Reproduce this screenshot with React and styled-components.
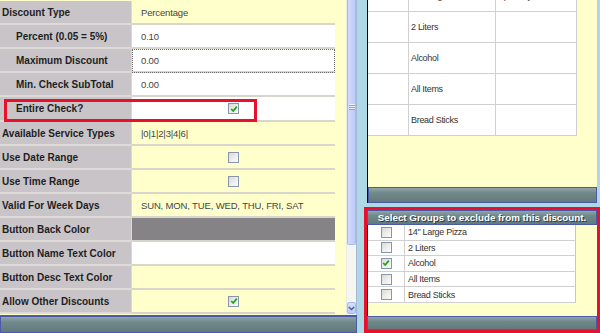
import React from 'react';
import styled, { createGlobalStyle } from 'styled-components';

const Global = createGlobalStyle`
  html, body { margin: 0; padding: 0; }
  body {
    width: 600px;
    height: 333px;
    overflow: hidden;
    background: #add8e6;
    font-family: "Liberation Sans", Arial, sans-serif;
  }
  * { box-sizing: border-box; }
`;

const BAR_BG = 'linear-gradient(#8fa5a7 0%, #72898b 35%, #637a7c 100%)';
const YELLOW = '#ffffcc';

const Screen = styled.div`
  display: flex;
  width: 600px;
  height: 333px;
  overflow: hidden;
  background: #add8e6;
`;

const LeftPanel = styled.div`
  width: 357px;
  display: flex;
  flex-direction: column;
`;

const GridArea = styled.div`
  display: flex;
  height: 315px;
`;

const Grid = styled.div`
  width: 346px;
  background: ${YELLOW};
  padding-top: 1px;
  overflow: hidden;
`;

const Row = styled.div`
  position: relative;
  display: grid;
  grid-template-columns: 132px 203px;
  height: ${p => p.$h || 24}px;
`;

const Label = styled.div`
  display: flex;
  align-items: center;
  background: #c8c4c8;
  border-bottom: 2px solid #dedad8;
  border-right: 1px solid #dcd8d8;
  padding-left: ${p => (p.$indent ? 16 : 2)}px;
  font-size: 10px;
  font-weight: bold;
  color: #1e1e1e;
  white-space: nowrap;
`;

const valueBg = { yellow: YELLOW, white: '#ffffff', gray: '#858385' };

const Value = styled.div`
  display: flex;
  align-items: center;
  justify-content: ${p => (p.$center ? 'center' : 'flex-start')};
  background: ${p => valueBg[p.$tone || 'yellow']};
  border-bottom: 2px solid #d8d5cd;
  padding-left: ${p => (p.$center ? 0 : 9)}px;
  font-size: 9.5px;
  letter-spacing: -0.15px;
  color: #454545;
  white-space: nowrap;
  outline: ${p => (p.$focus ? '1px dotted #6a6a6a' : 'none')};
  outline-offset: -1px;
`;

const Highlight = styled.div`
  position: absolute;
  left: 4px;
  top: 2px;
  width: 253px;
  height: 23px;
  border: 3px solid #e8102c;
  pointer-events: none;
`;

const Box = styled.span`
  display: inline-flex;
  align-items: center;
  justify-content: center;
  width: 11px;
  height: 11px;
  border: 1px solid #8796ab;
  background: linear-gradient(135deg, #d9d9d5 0%, #f0f0ec 60%, #fbfbf9 100%);
`;

const Check = ({ checked }) => (
  <Box>
    {checked && (
      <svg width="8" height="8" viewBox="0 0 8 8">
        <path d="M1.2 4 L3.2 6 L6.8 1.6" fill="none" stroke="#1fa11f" strokeWidth="1.7" />
      </svg>
    )}
  </Box>
);

const ScrollTrack = styled.div`
  width: 11px;
  display: flex;
  flex-direction: column;
  background: #f6f6f1;
  border-left: 1px solid #ebebe4;
  border-right: 1px solid #a9b5d6;
`;

const Thumb = styled.div`
  height: 245px;
  background: linear-gradient(90deg, #cfdafc, #bccbf8);
  border: 1px solid #aab9ee;
  border-top: none;
  border-radius: 0 0 2px 2px;
  display: flex;
  flex-direction: column;
  align-items: center;
  padding-top: 104px;
`;

const Grip = styled.div`
  width: 6px;
  height: 6px;
  background: repeating-linear-gradient(#eef2ff 0 1px, #8c9fd8 1px 2px);
`;

const TrackFill = styled.div`
  flex: 1;
`;

const ArrowBtn = styled.div`
  height: 12px;
  margin-bottom: 1px;
  display: flex;
  align-items: center;
  justify-content: center;
  background: linear-gradient(#d6e0fd, #bccbf8);
  border: 1px solid #aab9ee;
  border-radius: 2px;
`;

const Bar = styled.div`
  height: ${p => p.$h}px;
  background: ${BAR_BG};
  border: 1px solid #4a5aa8;
  border-top-width: ${p => p.$top || 1}px;
`;

const RightCol = styled.div`
  flex: 1;
  display: flex;
  flex-direction: column;
`;

const TopPanel = styled.div`
  height: 203px;
  margin: 0 3px 4px 10px;
  border-left: 1px solid #000;
  background: ${YELLOW};
  display: flex;
  flex-direction: column;
  overflow: hidden;
`;

const Viewport = styled.div`
  flex: 1;
  overflow: hidden;
`;

const ItemTable = styled.div`
  width: 209px;
  margin-top: -19px;
  display: grid;
  grid-template-columns: 41px 87px 81px;
  grid-auto-rows: 31px;
  background: #fff;
  border-right: 1px solid #cfcfcf;
`;

const Cell = styled.div`
  display: flex;
  align-items: center;
  padding-left: ${p => p.$pad ?? 2}px;
  justify-content: ${p => (p.$center ? 'center' : 'flex-start')};
  border-bottom: 1px solid #d0d0d0;
  border-right: ${p => (p.$last ? 'none' : '1px solid #d0d0d0')};
  font-size: 9px;
  letter-spacing: -0.3px;
  color: #333;
  white-space: nowrap;
  overflow: hidden;
`;

const RedBox = styled.div`
  flex: 1;
  margin-left: 7px;
  border: 3px solid #e8102c;
  display: flex;
  flex-direction: column;
`;

const Header = styled.div`
  height: 15px;
  background: ${BAR_BG};
  border: 1px solid #4a5aa8;
  display: flex;
  align-items: center;
  justify-content: center;
  color: #fff;
  font-size: 9.8px;
  font-weight: bold;
  text-shadow: 1px 1px 0 #2c3a3c;
  white-space: nowrap;
`;

const ListArea = styled.div`
  flex: 1;
  background: ${YELLOW};
  border-left: 1px solid #000;
`;

const ListTable = styled.div`
  width: 208px;
  display: grid;
  grid-template-columns: 37px 171px;
  grid-auto-rows: 15.6px;
  background: #fff;
  border-right: 1px solid #c8c8c8;
`;

const leftRows = [
  { label: 'Discount Type', value: 'Percentage' },
  { label: 'Percent (0.05 = 5%)', indent: true, value: '0.10', tone: 'white' },
  { label: 'Maximum Discount', indent: true, value: '0.00', tone: 'white', focus: true },
  { label: 'Min. Check SubTotal', indent: true, value: '0.00', tone: 'white' },
  { label: 'Entire Check?', indent: true, check: true, checked: true, tone: 'white', mark: true, h: 25 },
  { label: 'Available Service Types', value: '|0|1|2|3|4|6|' },
  { label: 'Use Date Range', check: true },
  { label: 'Use Time Range', check: true },
  { label: 'Valid For Week Days', value: 'SUN, MON, TUE, WED, THU, FRI, SAT' },
  { label: 'Button Back Color', value: '', tone: 'gray' },
  { label: 'Button Name Text Color', value: '', tone: 'white' },
  { label: 'Button Desc Text Color', value: '' },
  { label: 'Allow Other Discounts', check: true, checked: true },
];

const topItems = [
  ['14" Large Pizza', 'Specialty Pizzas'],
  ['2 Liters', ''],
  ['Alcohol', ''],
  ['All Items', ''],
  ['Bread Sticks', ''],
];

const groups = [
  { name: '14" Large Pizza', checked: false },
  { name: '2 Liters', checked: false },
  { name: 'Alcohol', checked: true },
  { name: 'All Items', checked: false },
  { name: 'Bread Sticks', checked: false },
];

export default function App() {
  return (
    <>
      <Global />
      <Screen>
        <LeftPanel>
          <GridArea>
            <Grid>
              {leftRows.map(r => (
                <Row key={r.label} $h={r.h}>
                  <Label $indent={r.indent}>{r.label}</Label>
                  <Value $tone={r.tone} $center={r.check} $focus={r.focus}>
                    {r.check ? <Check checked={r.checked} /> : r.value}
                  </Value>
                  {r.mark && <Highlight />}
                </Row>
              ))}
            </Grid>
            <ScrollTrack>
              <Thumb>
                <Grip />
              </Thumb>
              <TrackFill />
              <ArrowBtn>
                <svg width="7" height="5" viewBox="0 0 7 5">
                  <path d="M0.8 1 L3.5 3.6 L6.2 1" fill="none" stroke="#4b5f8c" strokeWidth="1.4" />
                </svg>
              </ArrowBtn>
            </ScrollTrack>
          </GridArea>
          <Bar $h={18} $top={2} />
        </LeftPanel>
        <RightCol>
          <TopPanel>
            <Viewport>
              <ItemTable>
                {topItems.map(([name, cat]) => (
                  <React.Fragment key={name}>
                    <Cell />
                    <Cell>{name}</Cell>
                    <Cell $last>{cat}</Cell>
                  </React.Fragment>
                ))}
              </ItemTable>
            </Viewport>
            <Bar $h={16} />
          </TopPanel>
          <RedBox>
            <Header>Select Groups to exclude from this discount.</Header>
            <ListArea>
              <ListTable>
                {groups.map(g => (
                  <React.Fragment key={g.name}>
                    <Cell $center $pad={0}>
                      <Check checked={g.checked} />
                    </Cell>
                    <Cell $last $pad={3}>{g.name}</Cell>
                  </React.Fragment>
                ))}
              </ListTable>
            </ListArea>
            <Bar $h={14} />
          </RedBox>
        </RightCol>
      </Screen>
    </>
  );
}
